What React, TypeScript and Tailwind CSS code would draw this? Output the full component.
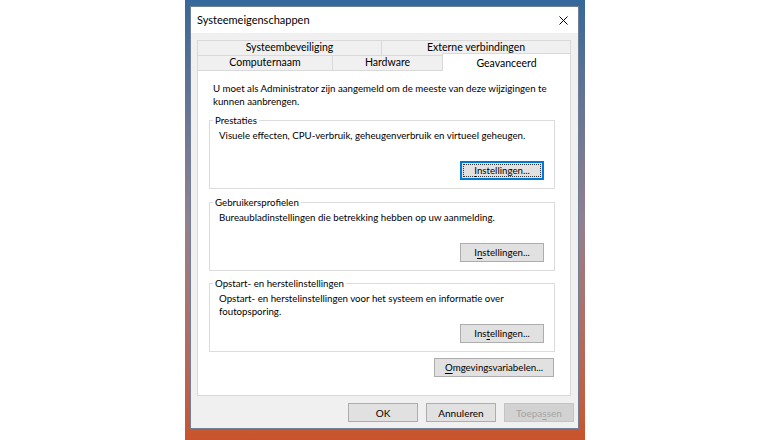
import React from "react";

type KnopProps = {
  children: React.ReactNode;
  className?: string;
  focused?: boolean;
  disabled?: boolean;
};

const Knop: React.FC<KnopProps> = ({ children, className = "", focused = false, disabled = false }) => {
  let look = "border border-[#adadad] bg-[#e1e1e1] text-black";
  if (focused) {
    look =
      "border-2 border-[#0078d7] bg-[#e1e1e1] text-black outline-1 outline-dotted outline-[#333] outline-offset-[-4px]";
  }
  if (disabled) {
    look = "border border-[#c4c4c4] bg-[#d2d2d2] text-[#a4a4a4]";
  }
  return (
    <button
      disabled={disabled}
      className={`flex h-[19px] items-center justify-center leading-none ${look} ${className}`}
    >
      {children}
    </button>
  );
};

// letter with the access-key underline
const U: React.FC<{ children: React.ReactNode }> = ({ children }) => (
  <span className="underline underline-offset-[2px]">{children}</span>
);

const groups = [
  {
    title: "Prestaties",
    lines: ["Visuele effecten, CPU-verbruik, geheugenverbruik en virtueel geheugen."],
    button: (
      <>
        <U>I</U>nstellingen...
      </>
    ),
    focused: true,
  },
  {
    title: "Gebruikersprofielen",
    lines: ["Bureaubladinstellingen die betrekking hebben op uw aanmelding."],
    button: (
      <>
        I<U>n</U>stellingen...
      </>
    ),
  },
  {
    title: "Opstart- en herstelinstellingen",
    lines: [
      "Opstart- en herstelinstellingen voor het systeem en informatie over",
      "foutopsporing.",
    ],
    button: (
      <>
        Ins<U>t</U>ellingen...
      </>
    ),
  },
];

export default function App() {
  return (
    <div className="flex h-[440px] w-[770px] justify-center bg-white font-['Lato',sans-serif] text-[10px] text-black">
      {/* wallpaper */}
      <div className="h-[440px] w-[400px] bg-linear-to-b from-[#35689a] via-[#93808e] to-[#c9532b] pl-[5px] pt-[6px]">
        {/* dialog */}
        <div className="flex w-[389px] flex-col border border-[#6f8096] bg-[#f0f0f0]">
          {/* title bar */}
          <div className="flex h-[26px] items-center justify-between bg-white pl-[6px] pr-[10px]">
            <span className="text-[11px]">Systeemeigenschappen</span>
            <svg width="9" height="9" viewBox="0 0 9 9" className="text-black">
              <path d="M0.5 0.5L8.5 8.5M8.5 0.5L0.5 8.5" stroke="currentColor" strokeWidth="1" />
            </svg>
          </div>

          <div className="flex flex-col pb-[6px] pl-[6px] pr-[4px] pt-[7px]">
            <div className="w-[374px] text-[10.5px]">
              {/* tabs, back row */}
              <div className="flex h-[15px]">
                <div className="flex w-[185px] items-center justify-center border border-b-0 border-[#d9d9d9]">
                  Systeembeveiliging
                </div>
                <div className="-ml-px flex flex-1 items-center justify-center border border-b-0 border-[#d9d9d9]">
                  Externe verbindingen
                </div>
              </div>
              {/* tabs, front row */}
              <div className="flex h-[15px] items-end">
                <div className="flex h-[15px] w-[136px] items-center justify-center border border-b-0 border-[#d9d9d9]">
                  Computernaam
                </div>
                <div className="-ml-px flex h-[15px] w-[111px] items-center justify-center border border-b-0 border-[#d9d9d9]">
                  Hardware
                </div>
                <div className="relative z-10 -mb-px -ml-px flex h-[18px] flex-1 justify-center border border-b-0 border-[#d9d9d9] bg-white pt-[2px]">
                  Geavanceerd
                </div>
              </div>

              {/* tab page */}
              <div className="h-[326px] border border-[#d9d9d9] bg-white text-[9.7px]">
                <p className="whitespace-nowrap pl-[15px] pt-[11px] leading-[13px]">
                  U moet als Administrator zijn aangemeld om de meeste van deze wijzigingen te
                  <br />
                  kunnen aanbrengen.
                </p>

                {groups.map((g, i) => (
                  <fieldset
                    key={g.title}
                    className={`ml-[11px] w-[346px] border border-[#dcdcdc] ${i === 1 ? "mt-[7px]" : "mt-[6px]"}`}
                  >
                    <legend className="ml-[3px] px-[2px] leading-[13px]">{g.title}</legend>
                    <div className="h-[27px] pl-[9px] pt-[2px] leading-[13px]">
                      {g.lines.map((l) => (
                        <div key={l} className="whitespace-nowrap">
                          {l}
                        </div>
                      ))}
                    </div>
                    <div className="mt-[7px] flex justify-end pb-[8px] pr-[10px]">
                      <Knop focused={g.focused} className="w-[84px]">
                        {g.button}
                      </Knop>
                    </div>
                  </fieldset>
                ))}

                <div className="ml-[11px] mt-[6px] flex w-[346px] justify-end pr-[1px]">
                  <Knop className="w-[120px]">
                    <U>O</U>mgevingsvariabelen...
                  </Knop>
                </div>
              </div>
            </div>

            {/* dialog buttons */}
            <div className="mt-[7px] flex justify-end gap-2">
              <Knop className="w-[70px]">OK</Knop>
              <Knop className="w-[70px]">Annuleren</Knop>
              <Knop disabled className="w-[70px]">
                Toepa<U>s</U>sen
              </Knop>
            </div>
          </div>
        </div>
      </div>
    </div>
  );
}
